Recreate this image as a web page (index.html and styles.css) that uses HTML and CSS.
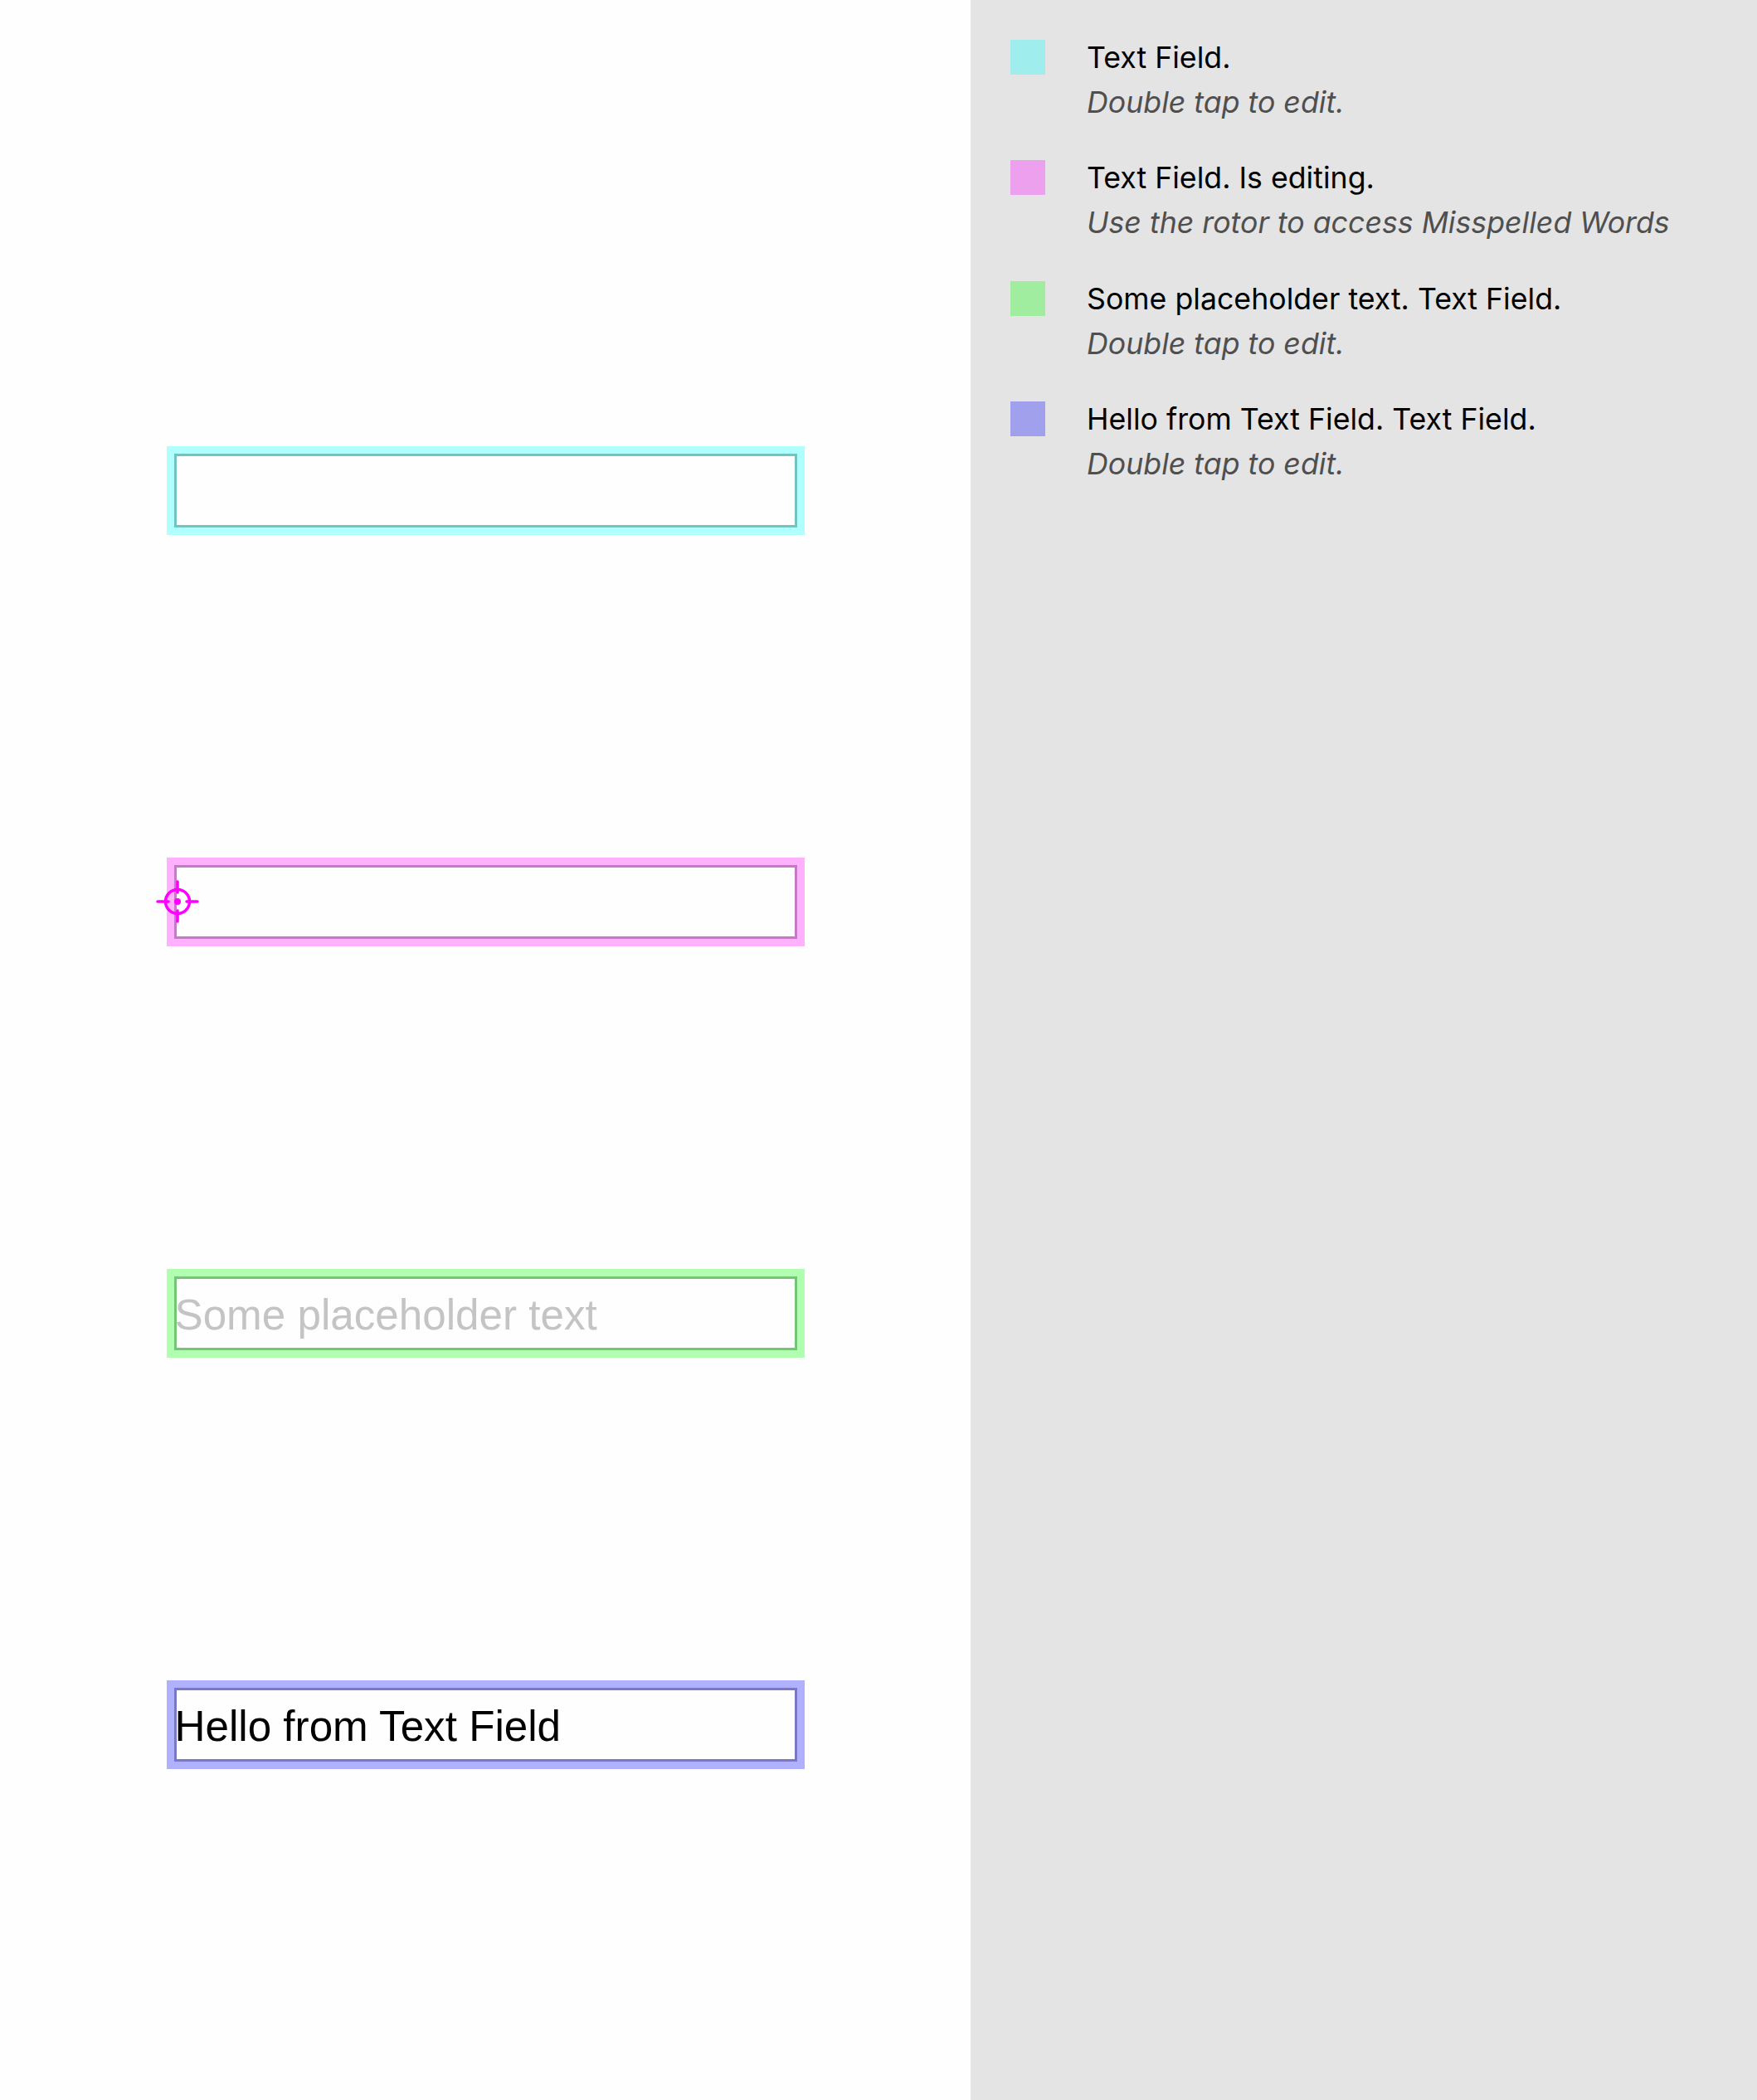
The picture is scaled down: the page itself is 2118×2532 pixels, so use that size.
FILE: index.html
```html
<!DOCTYPE html>
<html lang="en">
<head>
<meta charset="utf-8">
<title>Text Fields</title>
<link rel="stylesheet" href="styles.css">
</head>
<body>
<div class="screen">
  <main class="canvas">
    <div class="hl hl-cyan">
      <div class="field"></div>
    </div>
    <div class="hl hl-pink">
      <div class="field"></div>
      <svg class="crosshair" width="52" height="52" viewBox="0 0 52 52" aria-hidden="true">
        <circle cx="26" cy="26" r="14.5" fill="none" stroke="#ff00ff" stroke-width="3.5"/>
        <line x1="26" y1="2" x2="26" y2="15" stroke="#ff00ff" stroke-width="3.5" stroke-linecap="round"/>
        <line x1="26" y1="37" x2="26" y2="50" stroke="#ff00ff" stroke-width="3.5" stroke-linecap="round"/>
        <line x1="2" y1="26" x2="15" y2="26" stroke="#ff00ff" stroke-width="3.5" stroke-linecap="round"/>
        <line x1="37" y1="26" x2="50" y2="26" stroke="#ff00ff" stroke-width="3.5" stroke-linecap="round"/>
        <circle cx="26" cy="26" r="4" fill="#ff00ff"/>
      </svg>
    </div>
    <div class="hl hl-green">
      <div class="field"><span class="placeholder">Some placeholder text</span></div>
    </div>
    <div class="hl hl-blue">
      <div class="field"><span class="value">Hello from Text Field</span></div>
    </div>
  </main>
  <aside class="panel">
    <div class="item">
      <span class="swatch sw-cyan"></span>
      <div class="desc">
        <div class="title">Text Field.</div>
        <div class="hint">Double tap to edit.</div>
      </div>
    </div>
    <div class="item">
      <span class="swatch sw-pink"></span>
      <div class="desc">
        <div class="title">Text Field. Is editing.</div>
        <div class="hint">Use the rotor to access Misspelled Words</div>
      </div>
    </div>
    <div class="item">
      <span class="swatch sw-green"></span>
      <div class="desc">
        <div class="title">Some placeholder text. Text Field.</div>
        <div class="hint">Double tap to edit.</div>
      </div>
    </div>
    <div class="item">
      <span class="swatch sw-blue"></span>
      <div class="desc">
        <div class="title">Hello from Text Field. Text Field.</div>
        <div class="hint">Double tap to edit.</div>
      </div>
    </div>
  </aside>
</div>
</body>
</html>
```
FILE: styles.css
```css
html, body {
  margin: 0;
  padding: 0;
}
body {
  width: 2118px;
  height: 2532px;
  overflow: hidden;
  background: #fefefe;
  font-family: Inter, "Liberation Sans", sans-serif;
}
.screen {
  display: grid;
  grid-template-columns: 1170px 948px;
  height: 2532px;
}
.canvas {
  background: #fefefe;
  display: flex;
  flex-direction: column;
  align-items: center;
  padding-top: 538px;
  gap: 389px;
}
.hl {
  position: relative;
  width: 769px;
  height: 107px;
  padding: 9px;
  box-sizing: border-box;
}
.hl-cyan { background: #b0ffff; }
.hl-pink { background: #ffb0ff; }
.hl-green { background: #b0ffb0; }
.hl-blue { background: #b0b0ff; }
.field {
  height: 89px;
  box-sizing: border-box;
  background: #fefefe;
  border: 3px solid #73c4c0;
  font-family: "Liberation Sans", Arial, sans-serif;
  font-size: 51.2px;
  line-height: 88px;
  white-space: nowrap;
  overflow: hidden;
}
.field span {
  margin-left: -2px;
}
.hl-pink .field { border-color: #c47ac4; }
.hl-green .field { border-color: #76c476; }
.hl-blue .field { border-color: #7878c4; }
.placeholder { color: #c4c4c4; }
.value { color: #000; }
.crosshair {
  position: absolute;
  left: -13px;
  top: 27px;
}
.panel {
  background: #e4e4e4;
  padding: 42px 0 0 48px;
  display: flex;
  flex-direction: column;
  gap: 37.3px;
}
.item {
  display: flex;
  align-items: flex-start;
  gap: 50px;
}
.swatch {
  flex: none;
  width: 42px;
  height: 42px;
  margin-top: 6px;
}
.sw-cyan { background: #a0eded; }
.sw-pink { background: #eda0ed; }
.sw-green { background: #a0eda0; }
.sw-blue { background: #a0a0ed; }
.desc {
  font-size: 35.7px;
  line-height: 54px;
  white-space: nowrap;
}
.title { color: #000; }
.hint {
  color: #4f4f4f;
  font-style: italic;
}
```
